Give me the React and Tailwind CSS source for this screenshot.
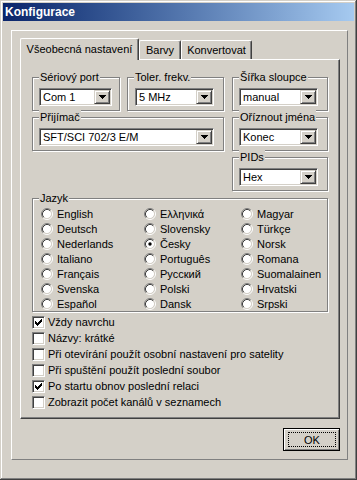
import React from "react";

function Combo({ value, w }) {
  return (
    <div
      className={`${w} flex h-[18px] p-[1px] bg-white border border-t-[#808080] border-l-[#808080] border-r-white border-b-white shadow-[inset_1px_1px_0_#404040,inset_-1px_-1px_0_#d4d0c8]`}
    >
      <div className="flex-1 pl-[2px] flex items-center leading-[14px] whitespace-nowrap overflow-hidden">
        {value}
      </div>
      <div className="w-[16px] h-full flex items-center justify-center bg-[#d4d0c8] border border-t-[#d4d0c8] border-l-[#d4d0c8] border-r-[#404040] border-b-[#404040] shadow-[inset_1px_1px_0_#fff,inset_-1px_-1px_0_#808080]">
        <svg width="7" height="4" viewBox="0 0 7 4" shapeRendering="crispEdges">
          <path d="M0 0h7v1H0z M1 1h5v1H1z M2 2h3v1H2z M3 3h1v1H3z" fill="#000" />
        </svg>
      </div>
    </div>
  );
}

function Group({ label, w, h, children, className = "" }) {
  return (
    <div
      className={`relative ${w} ${h} border border-[#808080] shadow-[1px_1px_0_#fff,inset_1px_1px_0_#fff] ${className}`}
    >
      <span className="absolute left-[6px] top-[-8px] px-[1px] bg-[#d4d0c8] leading-[14px] whitespace-nowrap">
        {label}
      </span>
      {children}
    </div>
  );
}

function RadioIcon({ checked }) {
  return (
    <svg width="12" height="12" viewBox="0 0 12 12" className="shrink-0">
      <circle cx="6" cy="6" r="4.2" fill="#fff" />
      <path d="M2.11 9.89 A5.5 5.5 0 0 1 9.89 2.11" stroke="#808080" fill="none" />
      <path d="M9.89 2.11 A5.5 5.5 0 0 1 2.11 9.89" stroke="#fff" fill="none" />
      <path d="M2.82 9.18 A4.5 4.5 0 0 1 9.18 2.82" stroke="#404040" fill="none" />
      <path d="M9.18 2.82 A4.5 4.5 0 0 1 2.82 9.18" stroke="#d4d0c8" fill="none" />
      {checked && <circle cx="6" cy="6" r="1.7" fill="#000" />}
    </svg>
  );
}

function Radio({ label, checked }) {
  return (
    <div className="flex items-center h-[15px] gap-[4px] whitespace-nowrap">
      <RadioIcon checked={checked} />
      <span className="leading-[14px]">{label}</span>
    </div>
  );
}

function Check({ label, checked }) {
  return (
    <div className="flex items-center h-[16px] gap-[3px] whitespace-nowrap">
      <div className="w-[13px] h-[13px] shrink-0 flex items-center justify-center bg-white border border-t-[#808080] border-l-[#808080] border-r-white border-b-white shadow-[inset_1px_1px_0_#404040,inset_-1px_-1px_0_#d4d0c8]">
        {checked && (
          <svg width="7" height="7" viewBox="0 0 7 7" shapeRendering="crispEdges">
            <path
              d="M6 0h1v3H6z M5 1h1v3H5z M4 2h1v3H4z M3 3h1v3H3z M2 4h1v3H2z M1 3h1v3H1z M0 2h1v3H0z"
              fill="#000"
            />
          </svg>
        )}
      </div>
      <span className="leading-[14px]">{label}</span>
    </div>
  );
}

const langs = [
  ["English", false],
  ["Deutsch", false],
  ["Nederlands", false],
  ["Italiano", false],
  ["Français", false],
  ["Svenska", false],
  ["Español", false],
  ["Ελληνικά", false],
  ["Slovensky", false],
  ["Česky", true],
  ["Português", false],
  ["Русский", false],
  ["Polski", false],
  ["Dansk", false],
  ["Magyar", false],
  ["Türkçe", false],
  ["Norsk", false],
  ["Romana", false],
  ["Suomalainen", false],
  ["Hrvatski", false],
  ["Srpski", false],
];

const checks = [
  ["Vždy navrchu", true],
  ["Názvy: krátké", false],
  ["Při otevírání použít osobní nastavení pro satelity", false],
  ["Při spuštění použít poslední soubor", false],
  ["Po startu obnov poslední relaci", true],
  ["Zobrazit počet kanálů v seznamech", false],
];

export default function App() {
  return (
    <div className="w-[357px] h-[480px] bg-[#d4d0c8] p-[3px] shadow-[inset_-1px_-1px_0_#404040,inset_1px_1px_0_#d4d0c8,inset_-2px_-2px_0_#808080,inset_2px_2px_0_#fff] font-['Liberation_Sans',Arial,sans-serif] text-[11px] text-black overflow-hidden">
      <div className="h-[18px] flex items-center pl-[2px] bg-gradient-to-r from-[#0a246a] to-[#a6caf0] text-white font-bold text-[12px]">
        Konfigurace
      </div>
      <div className="w-[337px] h-[430px] ml-[8px] mt-[9px] border border-t-white border-l-white border-r-[#808080] border-b-[#808080] pt-[7px] pl-[8px]">
        <div className="flex items-end h-[21px]">
          <div className="relative z-10 -mb-px w-[119px] h-[22px] flex items-center justify-center pb-[1px] bg-[#d4d0c8] border-t border-l border-r border-t-white border-l-white border-r-[#404040] shadow-[inset_-1px_0_0_#808080] rounded-t-[2px]">
            Všeobecná nastavení
          </div>
          <div className="w-[42px] h-[19px] flex items-center justify-center border-t border-l border-r border-t-white border-l-white border-r-[#404040] shadow-[inset_-1px_0_0_#808080] rounded-t-[2px]">
            Barvy
          </div>
          <div className="w-[71px] h-[19px] flex items-center justify-center border-t border-l border-r border-t-white border-l-white border-r-[#404040] shadow-[inset_-1px_0_0_#808080] rounded-t-[2px]">
            Konvertovat
          </div>
        </div>
        <div className="w-[320px] h-[360px] border border-t-white border-l-white border-r-[#404040] border-b-[#404040] shadow-[inset_-1px_-1px_0_#808080] pl-[11px] pt-[17px]">
          <div className="flex gap-[8px]">
            <div className="flex flex-col gap-[6px] w-[192px]">
              <div className="flex gap-[7px]">
                <Group label="Sériový port" w="w-[88px]" h="h-[34px]" className="pt-[10px] pl-[6px]">
                  <Combo value="Com 1" w="w-[73px]" />
                </Group>
                <Group label="Toler. frekv." w="w-[97px]" h="h-[34px]" className="pt-[10px] pl-[7px]">
                  <Combo value="5 MHz" w="w-[79px]" />
                </Group>
              </div>
              <Group label="Přijímač" w="w-[192px]" h="h-[34px]" className="pt-[10px] pl-[6px]">
                <Combo value="SFT/SCI 702/3 E/M" w="w-[175px]" />
              </Group>
            </div>
            <div className="flex flex-col gap-[6px] w-[96px]">
              <Group label="Šířka sloupce" w="w-[96px]" h="h-[34px]" className="pt-[10px] pl-[6px]">
                <Combo value="manual" w="w-[79px]" />
              </Group>
              <Group label="Oříznout jména" w="w-[96px]" h="h-[34px]" className="pt-[10px] pl-[6px]">
                <Combo value="Konec" w="w-[79px]" />
              </Group>
              <Group label="PIDs" w="w-[96px]" h="h-[34px]" className="pt-[10px] pl-[6px]">
                <Combo value="Hex" w="w-[79px]" />
              </Group>
            </div>
          </div>
          <Group label="Jazyk" w="w-[296px]" h="h-[114px]" className="mt-[7px] pt-[7px] pl-[8px]">
            <div className="grid grid-cols-[103px_97px_1fr] grid-rows-[repeat(7,15px)] grid-flow-col">
              {langs.map(([l, c]) => (
                <Radio key={l} label={l} checked={c} />
              ))}
            </div>
          </Group>
          <div className="mt-[2px] flex flex-col">
            {checks.map(([l, c]) => (
              <Check key={l} label={l} checked={c} />
            ))}
          </div>
        </div>
        <div className="w-[320px] flex justify-end mt-[9px]">
          <div className="w-[57px] h-[23px] p-[3px] pl-[4px] border border-black bg-[#d4d0c8] shadow-[inset_1px_1px_0_#fff,inset_-1px_-1px_0_#808080]">
            <div className="w-full h-full border border-dotted border-black flex items-center justify-center leading-[14px]">
              OK
            </div>
          </div>
        </div>
      </div>
    </div>
  );
}
